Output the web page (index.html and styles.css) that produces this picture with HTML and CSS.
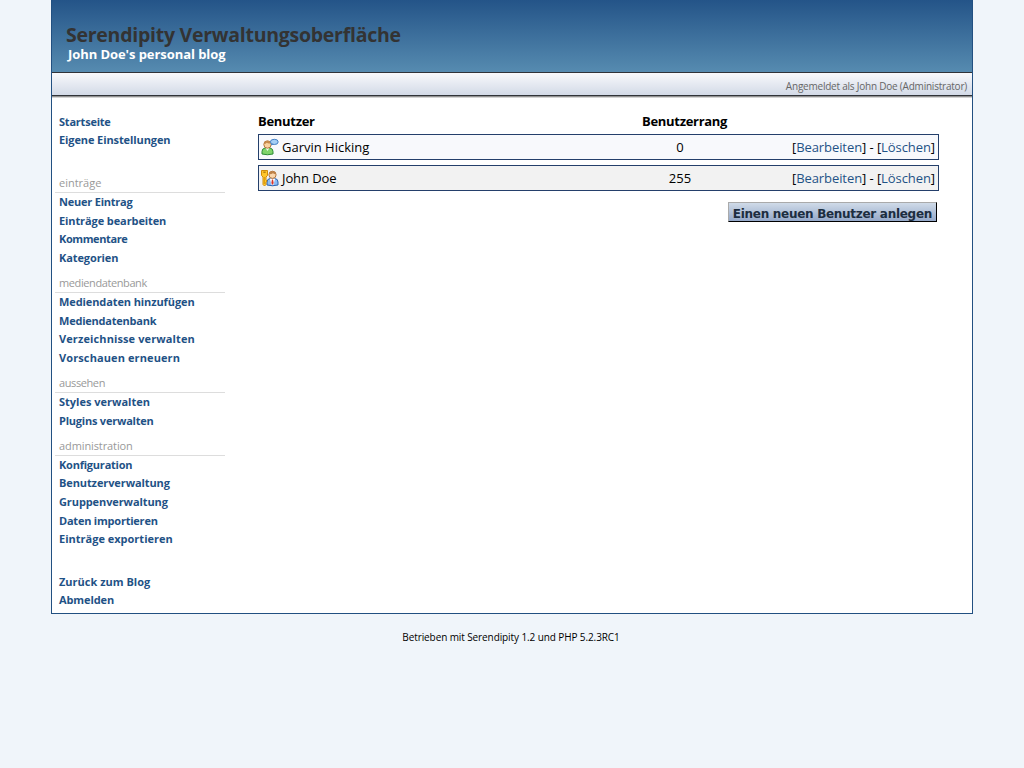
FILE: index.html
```html
<!DOCTYPE html>
<html lang="de">
<head>
<meta charset="utf-8">
<title>Serendipity Verwaltungsoberfläche</title>
<link rel="stylesheet" href="styles.css">
</head>
<body>
<div class="page">
  <header class="banner">
    <h1>Serendipity Verwaltungsoberfläche</h1>
    <h2>John Doe's personal blog</h2>
  </header>
  <div class="infopane">Angemeldet als John Doe (Administrator)</div>
  <div class="columns">
    <nav class="sidebar">
      <ul class="intro">
        <li class="tight">Startseite</li>
        <li class="snug">Eigene Einstellungen</li>
      </ul>
      <h3>einträge</h3>
      <ul>
        <li class="tight">Neuer Eintrag</li>
        <li class="snug">Einträge bearbeiten</li>
        <li class="tighter">Kommentare</li>
        <li class="snug">Kategorien</li>
      </ul>
      <h3 class="tighter">mediendatenbank</h3>
      <ul>
        <li class="snug">Mediendaten hinzufügen</li>
        <li class="tight">Mediendatenbank</li>
        <li class="loose">Verzeichnisse verwalten</li>
        <li class="loose">Vorschauen erneuern</li>
      </ul>
      <h3 class="tighter">aussehen</h3>
      <ul>
        <li>Styles verwalten</li>
        <li class="tight">Plugins verwalten</li>
      </ul>
      <h3 class="snug">administration</h3>
      <ul>
        <li class="tight">Konfiguration</li>
        <li class="snug">Benutzerverwaltung</li>
        <li class="snug">Gruppenverwaltung</li>
        <li class="tight">Daten importieren</li>
        <li>Einträge exportieren</li>
      </ul>
      <ul class="leave">
        <li>Zurück zum Blog</li>
        <li class="snug">Abmelden</li>
      </ul>
    </nav>
    <main class="content">
      <div class="grid heads"><span>Benutzer</span><span>Benutzerrang</span></div>
      <div class="grid user">
        <span class="name">
          <svg width="18" height="18" viewBox="0 0 18 18"><path d="M1 16v-2.500Q1 10.500 4 10h5q3 .5 3 3.500V16q-5.500 1.500-11 0z" fill="#7fd46a" stroke="#2d8a35"/><path d="M4.500 10l2 3 2-3z" fill="#f2faef"/><circle cx="6.500" cy="6.500" r="3.700" fill="#fad2a0" stroke="#b3753c"/><path d="M3 6Q3 3 6.500 3t3.300 2.200Q7 5.800 5.800 4.800 4.800 6 3 6z" fill="#c58a4b"/><ellipse cx="13.300" cy="3.900" rx="3.900" ry="2.600" fill="#a5cff5" stroke="#4580c4"/><path d="M10.500 5.500L9.800 7.600l3-1.400z" fill="#4580c4"/></svg>
          Garvin Hicking</span>
        <span class="num">0</span>
        <span class="actions">[<a>Bearbeiten</a>] - [<a>Löschen</a>]</span>
      </div>
      <div class="grid user even">
        <span class="name">
          <svg width="18" height="18" viewBox="0 0 18 18"><path d="M6 16v-3Q6 10 9 9.500h5q3 .5 3 3.500v3q-5.500 1.500-11 0z" fill="#8bbcf5" stroke="#2d62b0"/><path d="M8.800 9.500h5.400L12.300 16h-1.600z" fill="#fff"/><path d="M11 10.500h1l.7 3.500-1.200 2-1.200-2z" fill="#d8352b"/><circle cx="11.500" cy="5.800" r="3.600" fill="#fad7ae" stroke="#b3753c"/><path d="M8.200 5.300Q8.200 2.300 11.500 2.300t3.300 3Q13 5.200 12 4.200 10.200 5.500 8.200 5.300z" fill="#bd8248"/><path d="M.5 1.500h6v5L5 8v2.500L6 12l-1 1.300v2.200L3.500 17 2 15.500V8L.5 6.500z" fill="#ffc62b" stroke="#d08c0a"/><path d="M2.300 3.200h2.400" stroke="#9a6304"/><path d="M3.500 8v7" stroke="#e0a010"/></svg>
          <span class="snug">John Doe</span></span>
        <span class="num">255</span>
        <span class="actions">[<a>Bearbeiten</a>] - [<a>Löschen</a>]</span>
      </div>
      <div class="create"><a class="button">Einen neuen Benutzer anlegen</a></div>
    </main>
  </div>
</div>
<footer>Betrieben mit Serendipity 1.2 und PHP 5.2.3RC1</footer>
</body>
</html>
```
FILE: styles.css
```css
* { box-sizing: border-box; }
body { margin: 0; background: #f0f5fa; color: #000; font-family: "Open Sans", "Noto Sans", sans-serif; }
h1, h2, h3, ul { margin: 0; padding: 0; }
ul { list-style: none; }
a { color: #1f5286; }
.page { width: 922px; height: 614px; margin: 0 auto; background: #fff; border: 1px solid #225081; border-top: 0; }
.banner { height: 73px; padding: 23px 0 0 14px; background: linear-gradient(#245488, #568bb0); border-bottom: 1px solid #303338; }
h1 { font: bold 19.500px/24px "Open Sans", sans-serif; letter-spacing: -0.26px; color: #333; white-space: nowrap; }
h2 { font: bold 13px/15px "Open Sans", sans-serif; color: #fff; padding-left: 2px; letter-spacing: -0.07px; }
.infopane { height: 23px; margin-bottom: 3px; padding: 3px 5px 0 0; text-align: right; font-size: 10px; line-height: 20px; letter-spacing: -0.22px; color: #666; border-bottom: 1px solid #303338; background: linear-gradient(#f8f9fc, #d3dae7); box-shadow: 0 1px #929292, 0 2px #d5d5d5; }
.columns { display: flex; }
.sidebar { width: 170px; margin-left: 3px; padding-top: 13.900px; font-size: 11px; }
.sidebar li { height: 18.600px; line-height: 18.600px; padding-left: 4px; font-weight: bold; color: #1f5286; white-space: nowrap; }
.sidebar h3 { height: 25.600px; padding: 6.600px 0 0 4px; font-size: 11px; font-weight: normal; line-height: 18px; color: #999; border-bottom: 1px solid #ddd; }
.snug { letter-spacing: -0.1px; }
.tight { letter-spacing: -0.22px; }
.tighter { letter-spacing: -0.4px; }
.loose { letter-spacing: 0.11px; }
.intro { margin-bottom: 17.500px; }
.leave { margin-top: 23.800px; }
.content { width: 681px; margin-left: 33px; padding-top: 12px; font-size: 13px; }
.grid { display: grid; grid-template-columns: 384px 1fr; align-items: center; }
.heads { height: 23px; font-weight: bold; padding-bottom: 4px; letter-spacing: -0.3px; }
.user { height: 26px; padding: 0 3px 0 2px; margin-bottom: 5px; border: 1px solid #243f6b; background: #f8f9fc; grid-template-columns: 376px 86px 1fr; }
.even { background: #f2f2f2; }
.name { display: flex; align-items: center; gap: 3px; }
.num { text-align: center; }
.actions { text-align: right; white-space: nowrap; letter-spacing: -0.08px; }
.create { text-align: right; padding: 6px 2px 0 0; }
.button { display: inline-block; height: 20px; padding: 1px 4px 0; font: bold 12px/20px "DejaVu Sans", sans-serif; letter-spacing: -0.29px; color: #1c2d40; border: 1px solid #000; border-top-color: #aaa; border-left-color: #aaa; background: linear-gradient(#d0dbe8, #94a8c9); white-space: nowrap; }
footer { text-align: center; font-size: 10px; line-height: 14px; padding: 16px 2px 0 0; letter-spacing: -0.1px; }
```
